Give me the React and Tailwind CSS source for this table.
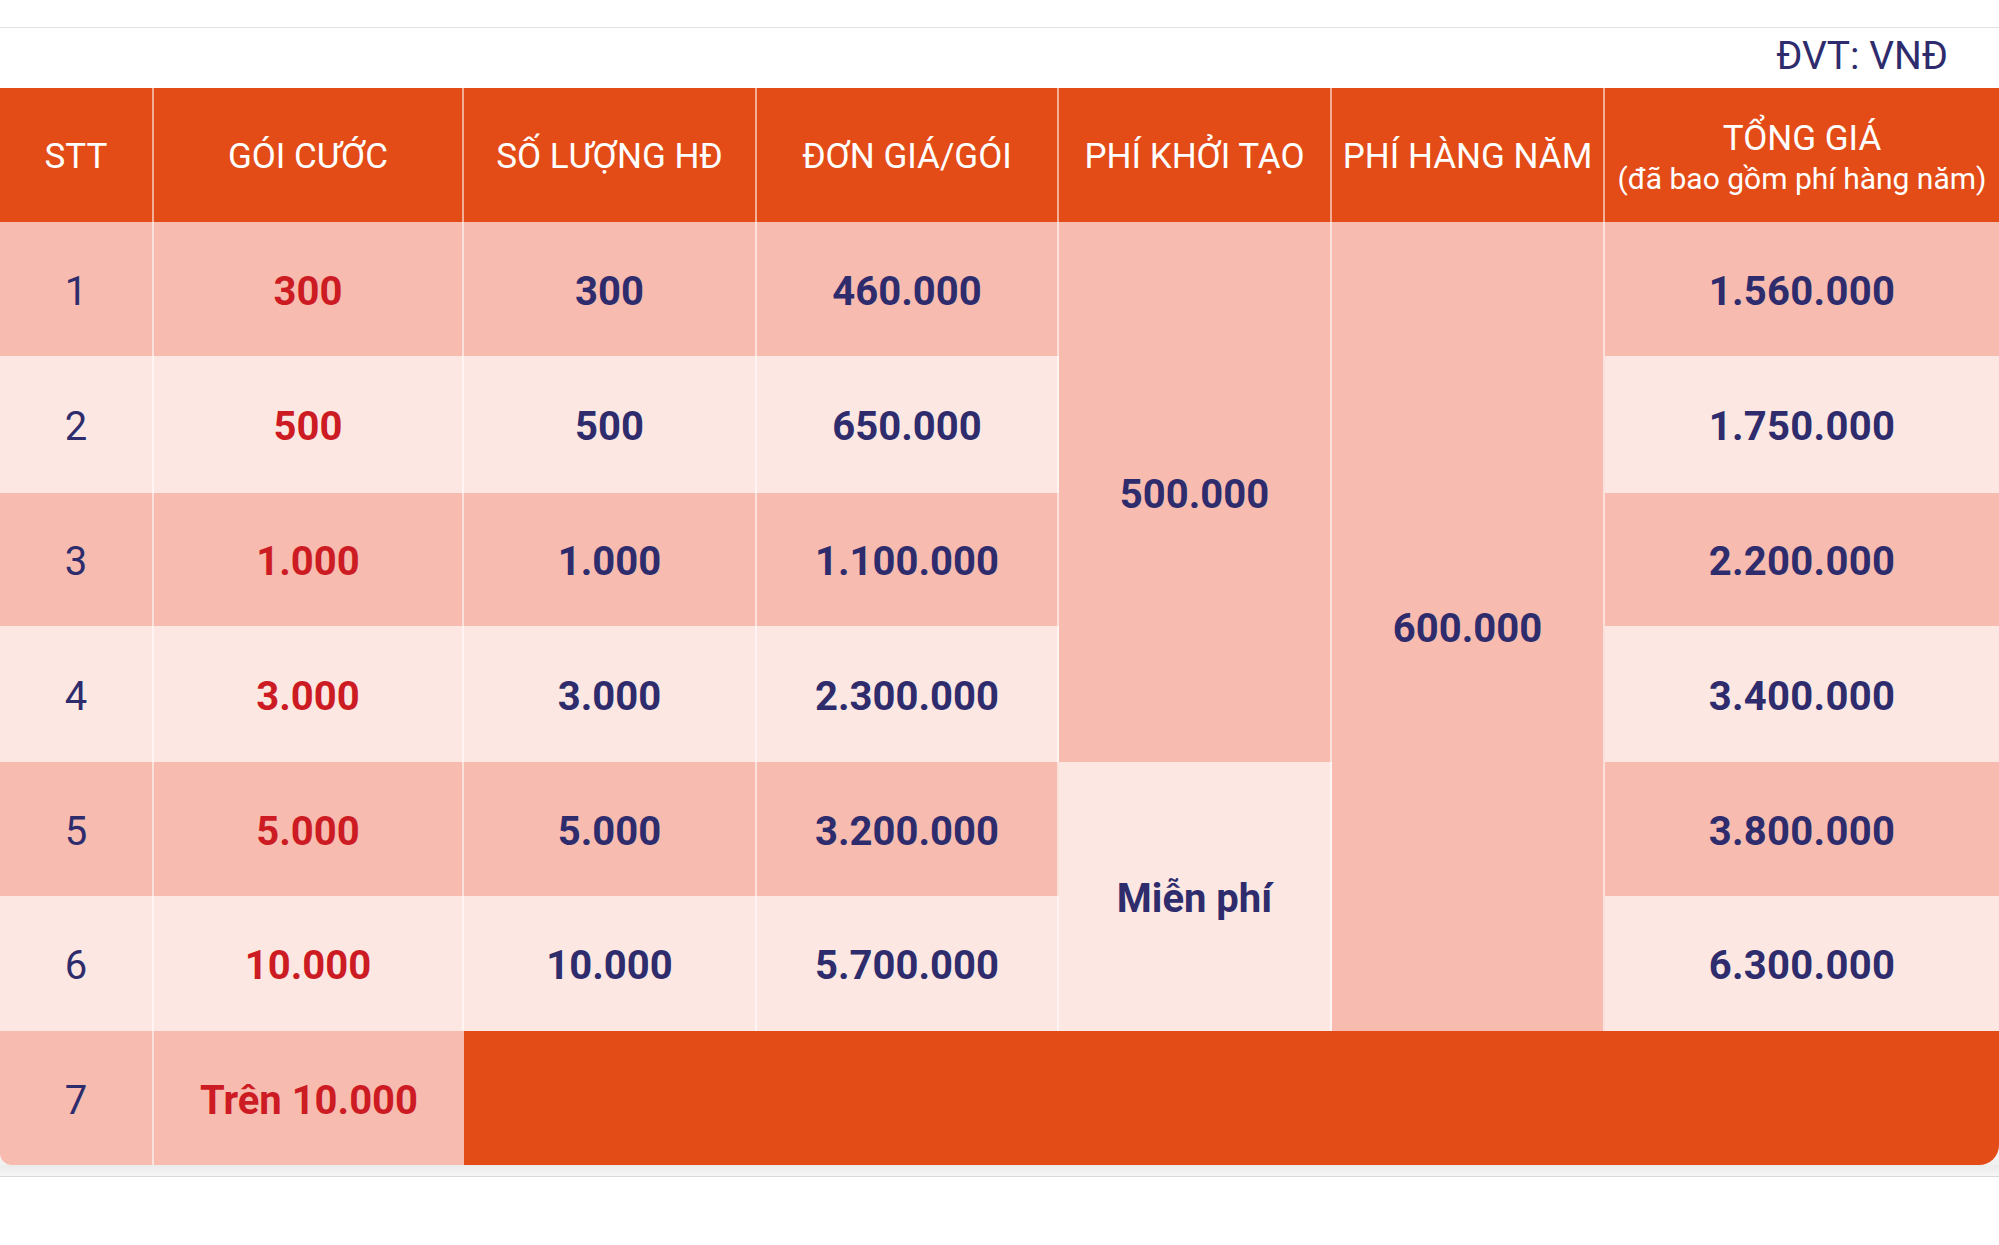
import React from "react";

const rows = [
  ["1", "300", "300", "460.000", "1.560.000"],
  ["2", "500", "500", "650.000", "1.750.000"],
  ["3", "1.000", "1.000", "1.100.000", "2.200.000"],
  ["4", "3.000", "3.000", "2.300.000", "3.400.000"],
  ["5", "5.000", "5.000", "3.200.000", "3.800.000"],
  ["6", "10.000", "10.000", "5.700.000", "6.300.000"],
];

const cell = "flex items-center justify-center text-center";
const body = "pt-[5px]";
const sep = "border-r-2 border-white/55";

function HeaderCell({ children, last }) {
  return (
    <div className={`${cell} pt-[4px] ${last ? "" : sep} bg-[#e34c17] text-white text-[35px] leading-[40px] font-normal whitespace-nowrap`}>
      {children}
    </div>
  );
}

export default function App() {
  return (
    <div className="w-[1999px] min-h-[1245px] bg-white" style={{ fontFamily: "Roboto, 'Noto Sans', sans-serif" }}>
      <div className="h-[28px] border-b border-[#e2e2e2]" />
      <div className="h-[60px] flex items-center justify-end pr-[51px] pb-[4px]">
        <span className="text-[39px] leading-none text-[#2e2c6d]">ĐVT: VNĐ</span>
      </div>

      <div className="bg-[#f1f1f1]">
        <div className="grid grid-cols-[154px_310px_293px_302px_273px_273px_394px] grid-rows-[134px_134px_137px_133px_136px_134px_135px_134px] rounded-bl-[12px] rounded-br-[20px] overflow-hidden">
          <HeaderCell>STT</HeaderCell>
          <HeaderCell>GÓI CƯỚC</HeaderCell>
          <HeaderCell>SỐ LƯỢNG HĐ</HeaderCell>
          <HeaderCell>ĐƠN GIÁ/GÓI</HeaderCell>
          <HeaderCell>PHÍ KHỞI TẠO</HeaderCell>
          <HeaderCell>PHÍ HÀNG NĂM</HeaderCell>
          <div className={`${cell} pt-[6px] flex-col bg-[#e34c17] text-white whitespace-nowrap`}>
            <span className="text-[35px] leading-[40px]">TỔNG GIÁ</span>
            <span className="text-[30px] leading-[36px] mt-[2px]">(đã bao gồm phí hàng năm)</span>
          </div>

          {rows.map((r, i) => {
            const bg = i % 2 === 0 ? "bg-[#f7bcaf]" : "bg-[#fce7e2]";
            return (
              <React.Fragment key={r[0]}>
                <div className={`${cell} ${body} ${sep} ${bg} text-[40px] text-[#2e2c6d] font-normal`}>{r[0]}</div>
                <div className={`${cell} ${body} ${sep} ${bg} text-[40px] text-[#cc1b23] font-bold`}>{r[1]}</div>
                <div className={`${cell} ${body} ${sep} ${bg} text-[40px] text-[#2e2c6d] font-bold`}>{r[2]}</div>
                <div className={`${cell} ${body} ${sep} ${bg} text-[40px] text-[#2e2c6d] font-bold`}>{r[3]}</div>
                {i === 0 && (
                  <div className={`${cell} ${body} ${sep} row-span-4 bg-[#f7bcaf] text-[40px] text-[#2e2c6d] font-bold`}>500.000</div>
                )}
                {i === 4 && (
                  <div className={`${cell} ${body} ${sep} row-span-2 bg-[#fce7e2] text-[40px] text-[#2e2c6d] font-bold`}>Miễn phí</div>
                )}
                {i === 0 && (
                  <div className={`${cell} ${body} ${sep} row-span-6 bg-[#f7bcaf] text-[40px] text-[#2e2c6d] font-bold`}>600.000</div>
                )}
                <div className={`${cell} ${body} ${bg} text-[40px] text-[#2e2c6d] font-bold tracking-[0.3px]`}>{r[4]}</div>
              </React.Fragment>
            );
          })}

          <div className={`${cell} ${body} ${sep} bg-[#f7bcaf] text-[40px] text-[#2e2c6d] font-normal`}>7</div>
          <div className={`${cell} ${body} bg-[#f7bcaf] text-[40px] text-[#cc1b23] font-bold`}>Trên 10.000</div>
          <div className="col-span-5 bg-[#e34c17]" />
        </div>
        <div className="h-[11px] bg-gradient-to-b from-[#ebebeb] to-[#f6f6f6]" />
      </div>
      <div className="h-px bg-[#d9d9d9]" />
    </div>
  );
}
